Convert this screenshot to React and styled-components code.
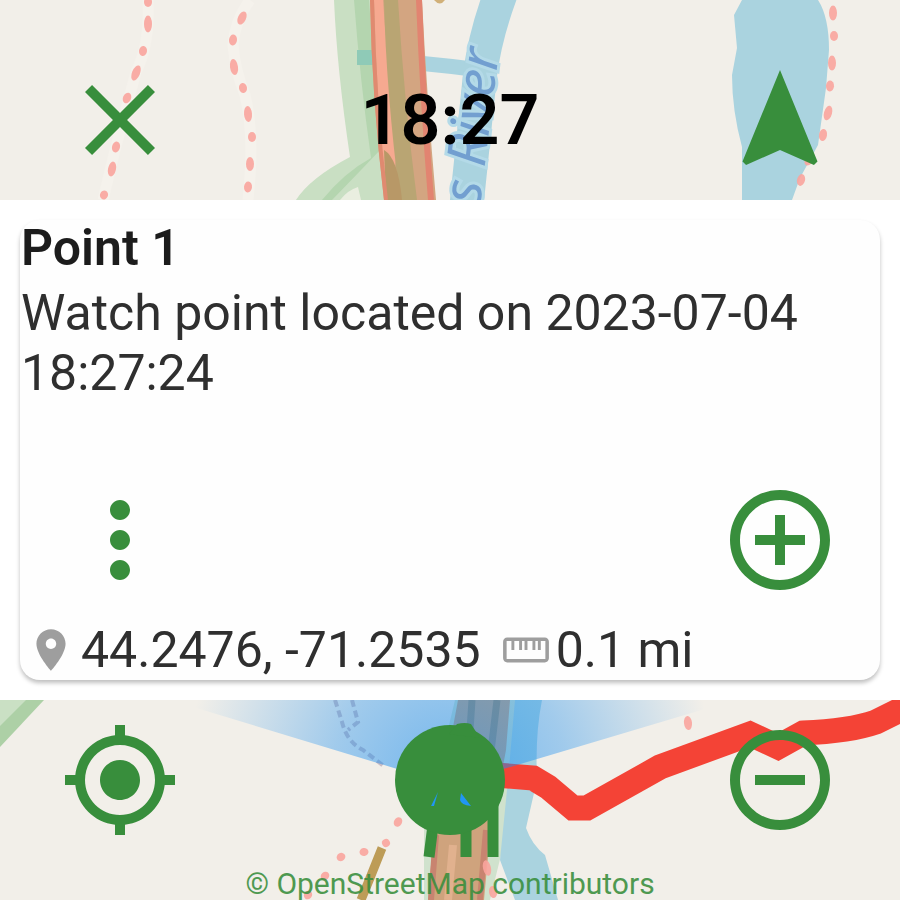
import React from "react";
import styled, { createGlobalStyle } from "styled-components";

const GREEN = "#388e3c";

const GlobalStyle = createGlobalStyle`
  * { box-sizing: border-box; }
  body {
    margin: 0;
    background: #fff;
    font-family: Roboto, "Liberation Sans", sans-serif;
  }
`;

const Screen = styled.main`
  display: flex;
  flex-direction: column;
  min-height: 100vh;
`;

const MapBand = styled.section`
  position: relative;
  isolation: isolate;
  overflow: hidden;
  display: flex;
  flex-direction: column;
  justify-content: space-between;
  min-height: 200px;
  padding: ${(p) => (p.$edge === "top" ? "60px 60px 20px" : "20px 60px 0")};
  background: #f2efe9;
`;

const MapCanvas = styled.svg`
  position: absolute;
  inset: 0;
  z-index: -1;
  width: 100%;
  height: 100%;
`;

const MapLabel = styled.text`
  font: italic 400 54px "Noto Sans", "Open Sans", sans-serif;
  fill: #729fd0;
  stroke: #b4dae8;
  stroke-width: 6px;
  paint-order: stroke;
`;

const Controls = styled.div`
  display: flex;
  align-items: center;
  justify-content: space-between;
`;

const IconButton = styled.button`
  display: grid;
  place-items: center;
  width: 120px;
  height: 120px;
  padding: 0;
  border: 0;
  background: none;
  color: ${GREEN};
  cursor: pointer;
`;

const Glyph = styled.svg`
  display: block;
  flex: none;
  width: ${(p) => p.$size}px;
  height: ${(p) => p.$size}px;
  fill: currentColor;
`;

const Clock = styled.time`
  font-size: 70px;
  line-height: 84px;
  font-weight: 600;
  color: #000;
`;

const Panel = styled.section`
  display: flex;
  flex: 1;
  min-height: 500px;
  padding: 20px;
  background: #fff;
`;

const Card = styled.article`
  display: flex;
  flex: 1;
  flex-direction: column;
  border-radius: 20px;
  background: #fefefe;
  box-shadow: 0 3px 4px rgba(0, 0, 0, 0.25);
  color: #2f2f2f;
`;

const Title = styled.h1`
  margin: 0;
  padding-left: 1px;
  font-size: 50px;
  line-height: 56px;
  font-weight: 600;
  color: #1c1c1c;
`;

const Description = styled.p`
  margin: 7px 0 0;
  padding-left: 1px;
  font-size: 50px;
  line-height: 60px;
`;

const CardActions = styled(Controls)`
  margin-top: auto;
  padding: 0 40px;
`;

const Meta = styled.footer`
  display: flex;
  align-items: center;
  gap: 20px;
  margin-top: 20px;
  padding: 0 6px;
  font-size: 50px;
  line-height: 60px;
`;

const MetaItem = styled.span`
  display: flex;
  align-items: center;
  gap: 5px;

  svg {
    color: #9e9e9e;
  }
`;

const Attribution = styled.a`
  align-self: center;
  font-size: 30px;
  line-height: 32px;
  color: ${GREEN};
  opacity: 0.88;
  text-decoration: none;
  white-space: nowrap;
`;

const PATHS = {
  close:
    "M19 6.41 17.59 5 12 10.59 6.41 5 5 6.41 10.59 12 5 17.59 6.41 19 12 13.41 17.59 19 19 17.59 13.41 12z",
  navigation: "M12 2 4.5 20.29l.71.71L12 18l6.79 3 .71-.71z",
  more:
    "M12 8c1.1 0 2-.9 2-2s-.9-2-2-2-2 .9-2 2 .9 2 2 2zm0 2c-1.1 0-2 .9-2 2s.9 2 2 2 2-.9 2-2-.9-2-2-2zm0 6c-1.1 0-2 .9-2 2s.9 2 2 2 2-.9 2-2-.9-2-2-2z",
  add:
    "M13 7h-2v4H7v2h4v4h2v-4h4v-2h-4V7zm-1-5C6.48 2 2 6.48 2 12s4.48 10 10 10 10-4.48 10-10S17.52 2 12 2zm0 18c-4.41 0-8-3.59-8-8s3.59-8 8-8 8 3.59 8 8-3.59 8-8 8z",
  remove:
    "M7 11v2h10v-2H7zm5-9C6.48 2 2 6.48 2 12s4.48 10 10 10 10-4.48 10-10S17.52 2 12 2zm0 18c-4.41 0-8-3.59-8-8s3.59-8 8-8 8 3.59 8 8-3.59 8-8 8z",
  locate:
    "M12 8c-2.21 0-4 1.79-4 4s1.79 4 4 4 4-1.79 4-4-1.79-4-4-4zm8.94 3c-.46-4.17-3.77-7.48-7.94-7.94V1h-2v2.06C6.83 3.52 3.52 6.83 3.06 11H1v2h2.06c.46 4.17 3.77 7.48 7.94 7.94V23h2v-2.06c4.17-.46 7.48-3.77 7.94-7.94H23v-2h-2.06zM12 19c-3.87 0-7-3.13-7-7s3.13-7 7-7 7 3.13 7 7-3.13 7-7 7z",
  place:
    "M12 2C8.13 2 5 5.13 5 9c0 5.25 7 13 7 13s7-7.75 7-13c0-3.87-3.13-7-7-7zm0 9.5c-1.38 0-2.5-1.12-2.5-2.5s1.12-2.5 2.5-2.5 2.5 1.12 2.5 2.5-1.12 2.5-2.5 2.5z",
  ruler:
    "M21 6H3c-1.1 0-2 .9-2 2v8c0 1.1.9 2 2 2h18c1.1 0 2-.9 2-2V8c0-1.1-.9-2-2-2zm.3 10.3H2.7V7.7H5V12h1.4V7.7h2.3V12h1.4V7.7h1.2V12h1.4V7.7h2.4V12h1.4V7.7h1.2V12h1.4V7.7h2.2v8.6z",
};

function Icon({ name, size = 120 }) {
  return (
    <Glyph $size={size} viewBox="0 0 24 24" aria-hidden="true">
      <path d={PATHS[name]} />
    </Glyph>
  );
}

/* Footpaths are drawn as separate short marks: [x, y, length, tilt in degrees]. */
const NORTH_MARKS = [
  [148, 2, 10, 0], [148, 24, 17, 0], [143, 51, 10, 10], [136, 73, 16, 22], [127, 98, 11, 25],
  [116, 147, 11, 15], [112, 169, 15, 12], [104, 195, 9, 20],
  [242, 18, 14, 25], [233, 40, 11, 5], [234, 67, 16, -8], [243, 88, 10, -10], [248, 114, 16, -4],
  [252, 137, 10, 0], [250, 164, 14, 0], [248, 187, 11, 4],
  [833, 13, 15, 0], [834, 36, 10, 0], [832, 63, 15, 0], [830, 86, 11, 3], [828, 113, 15, 15],
  [823, 135, 12, 10], [809, 160, 12, 30], [801, 180, 12, 15],
];

const SOUTH_MARKS = [
  [688, 23, 14, -6], [398, 122, 10, 30], [386, 143, 8, 60], [364, 152, 9, 80], [341, 157, 9, 60],
  [325, 176, 9, 50], [308, 195, 9, 40], [487, 168, 16, -12], [493, 192, 12, -10],
];

function Footpath({ marks }) {
  return marks.map(([x, y, length, tilt]) => (
    <ellipse
      key={`${x}-${y}`}
      cx={x}
      cy={y}
      rx="4"
      ry={length / 2}
      transform={`rotate(${tilt} ${x} ${y})`}
      fill="#f9a49d"
      opacity="0.9"
    />
  ));
}

function NorthMap() {
  return (
    <MapCanvas viewBox="0 0 900 200" preserveAspectRatio="xMidYMid slice" aria-hidden="true">
      <g fill="none" stroke="#f5f2ec" strokeWidth="11">
        <path d="M148 0 Q150 45 136 72 L115 150 L103 200" />
        <path d="M250 0 Q235 20 233 45 Q235 70 245 95 Q255 135 248 200" />
      </g>
      <path d="M334 0H370L386 200H296Q310 178 350 157Q337 70 334 0Z" fill="#c9dfc3" />
      <path d="M354 0H369L380 150Q366 165 332 200H322Q345 172 371 158Q360 80 354 0Z" fill="#b4d5af" />
      <path d="M340 200Q348 190 358 187L361 200Z" fill="#eaeee0" />
      <path d="M357 50H376V65H357Z" fill="#8fcab7" />
      <path d="M418 63 Q450 66 480 70" fill="none" stroke="#aad3df" strokeWidth="15" />
      <path d="M502 -10 Q485 35 480 75 L466 210" fill="none" stroke="#aad3df" strokeWidth="34" />
      <path d="M742 0H818Q829 17 829 50L826 88L818 145L800 178L792 200H742L742 147Q732 110 732 75L737 48L734 15Z" fill="#aad3df" />
      <path d="M370 0H422Q427 100 436 200H384Q372 100 370 0Z" fill="#d3a581" />
      <path d="M374 0H383Q390 100 398 145L390 200H385Q377 100 374 0Z" fill="#f6a990" />
      <path d="M384 0H398Q404 100 417 200H400Q386 90 384 0Z" fill="#b9a573" />
      <path d="M384 150Q398 158 402 200H386Z" fill="#b89867" />
      <path d="M372 0Q374 100 386 200" fill="none" stroke="#e08a70" strokeWidth="4" />
      <path d="M419 0Q423 100 431 200" fill="none" stroke="#e28471" strokeWidth="6" />
      <path d="M434 0Q440 7 445 0Z" fill="#d1b078" />
      <Footpath marks={NORTH_MARKS} />
      <MapLabel transform="translate(480 205) rotate(-83)">s River</MapLabel>
    </MapCanvas>
  );
}

function SouthMap() {
  return (
    <MapCanvas viewBox="0 0 900 200" preserveAspectRatio="xMidYMid slice" aria-hidden="true">
      <defs>
        <radialGradient id="beam" gradientUnits="userSpaceOnUse" cx="450" cy="80" r="265">
          <stop offset="0" stopColor="#1c8ff0" stopOpacity="0.6" />
          <stop offset="0.45" stopColor="#1c8ff0" stopOpacity="0.38" />
          <stop offset="1" stopColor="#1c8ff0" stopOpacity="0" />
        </radialGradient>
      </defs>
      <path d="M0 0H44L0 47Z" fill="#add0a6" />
      <path d="M0 0H26L0 26Z" fill="#cae0c4" />
      <path d="M455 0H532L535 60L512 110L490 200H424L424 130Z" fill="#d0e2cd" />
      <path d="M515 0H542Q535 35 537 80L526 128Q532 145 545 155L558 200H515L500 160L508 80Z" fill="#aad3df" />
      <path d="M458 0H510L506 50L490 135L484 200H428L434 130Z" fill="#cfa37d" />
      <path d="M436 135L431 200M486 130L480 200" fill="none" stroke="#c88470" strokeWidth="6" />
      <path d="M453 145L448 200" fill="none" stroke="#e1b18e" strokeWidth="8" />
      <path d="M472 0L468 60M497 0L490 60" fill="none" stroke="#a68a68" strokeWidth="7" />
      <path d="M382 148L370 178L361 200" fill="none" stroke="#bd9c57" strokeWidth="9" />
      <Footpath marks={SOUTH_MARKS} />
      <path d="M335 0L342 22Q347 42 363 50L385 67M352 0L358 22L348 30" fill="none" stroke="#c9bcc4" strokeWidth="4" strokeDasharray="7 4" />
      <path
        d="M496 75L533 78L548 87L573 108L587 108L660 67L750 34L778 47L803 33Q850 31 876 22L910 5"
        fill="none"
        stroke="#f44336"
        strokeWidth="25"
      />
      <path d="M170 0H735L450 85Z" fill="url(#beam)" />
      <path d="M433 125L429 157M466 125V157M493 105V157" fill="none" stroke={GREEN} strokeWidth="11" />
      <circle cx="450" cy="80" r="55" fill={GREEN} />
      <path d="M449 34L457 24Q465 22 471 24L480 38Z" fill={GREEN} />
      <path d="M438 92L431 106H434Z M461 93L471 106Q461 105 460 100Z" fill="#2196f3" />
    </MapCanvas>
  );
}

export default function App() {
  return (
    <>
      <GlobalStyle />
      <Screen>
        <MapBand $edge="top">
          <NorthMap />
          <Controls>
            <IconButton type="button" aria-label="Close">
              <Icon name="close" />
            </IconButton>
            <Clock dateTime="18:27">18:27</Clock>
            <IconButton type="button" aria-label="Navigate">
              <Icon name="navigation" />
            </IconButton>
          </Controls>
        </MapBand>

        <Panel>
          <Card>
            <Title>Point 1</Title>
            <Description>Watch point located on 2023-07-04 18:27:24</Description>
            <CardActions>
              <IconButton type="button" aria-label="More options">
                <Icon name="more" />
              </IconButton>
              <IconButton type="button" aria-label="Zoom in">
                <Icon name="add" />
              </IconButton>
            </CardActions>
            <Meta>
              <MetaItem>
                <Icon name="place" size={50} />
                44.2476, -71.2535
              </MetaItem>
              <MetaItem>
                <Icon name="ruler" size={50} />
                0.1 mi
              </MetaItem>
            </Meta>
          </Card>
        </Panel>

        <MapBand $edge="bottom">
          <SouthMap />
          <Controls>
            <IconButton type="button" aria-label="My location">
              <Icon name="locate" />
            </IconButton>
            <IconButton type="button" aria-label="Zoom out">
              <Icon name="remove" />
            </IconButton>
          </Controls>
          <Attribution href="#copyright">© OpenStreetMap contributors</Attribution>
        </MapBand>
      </Screen>
    </>
  );
}
